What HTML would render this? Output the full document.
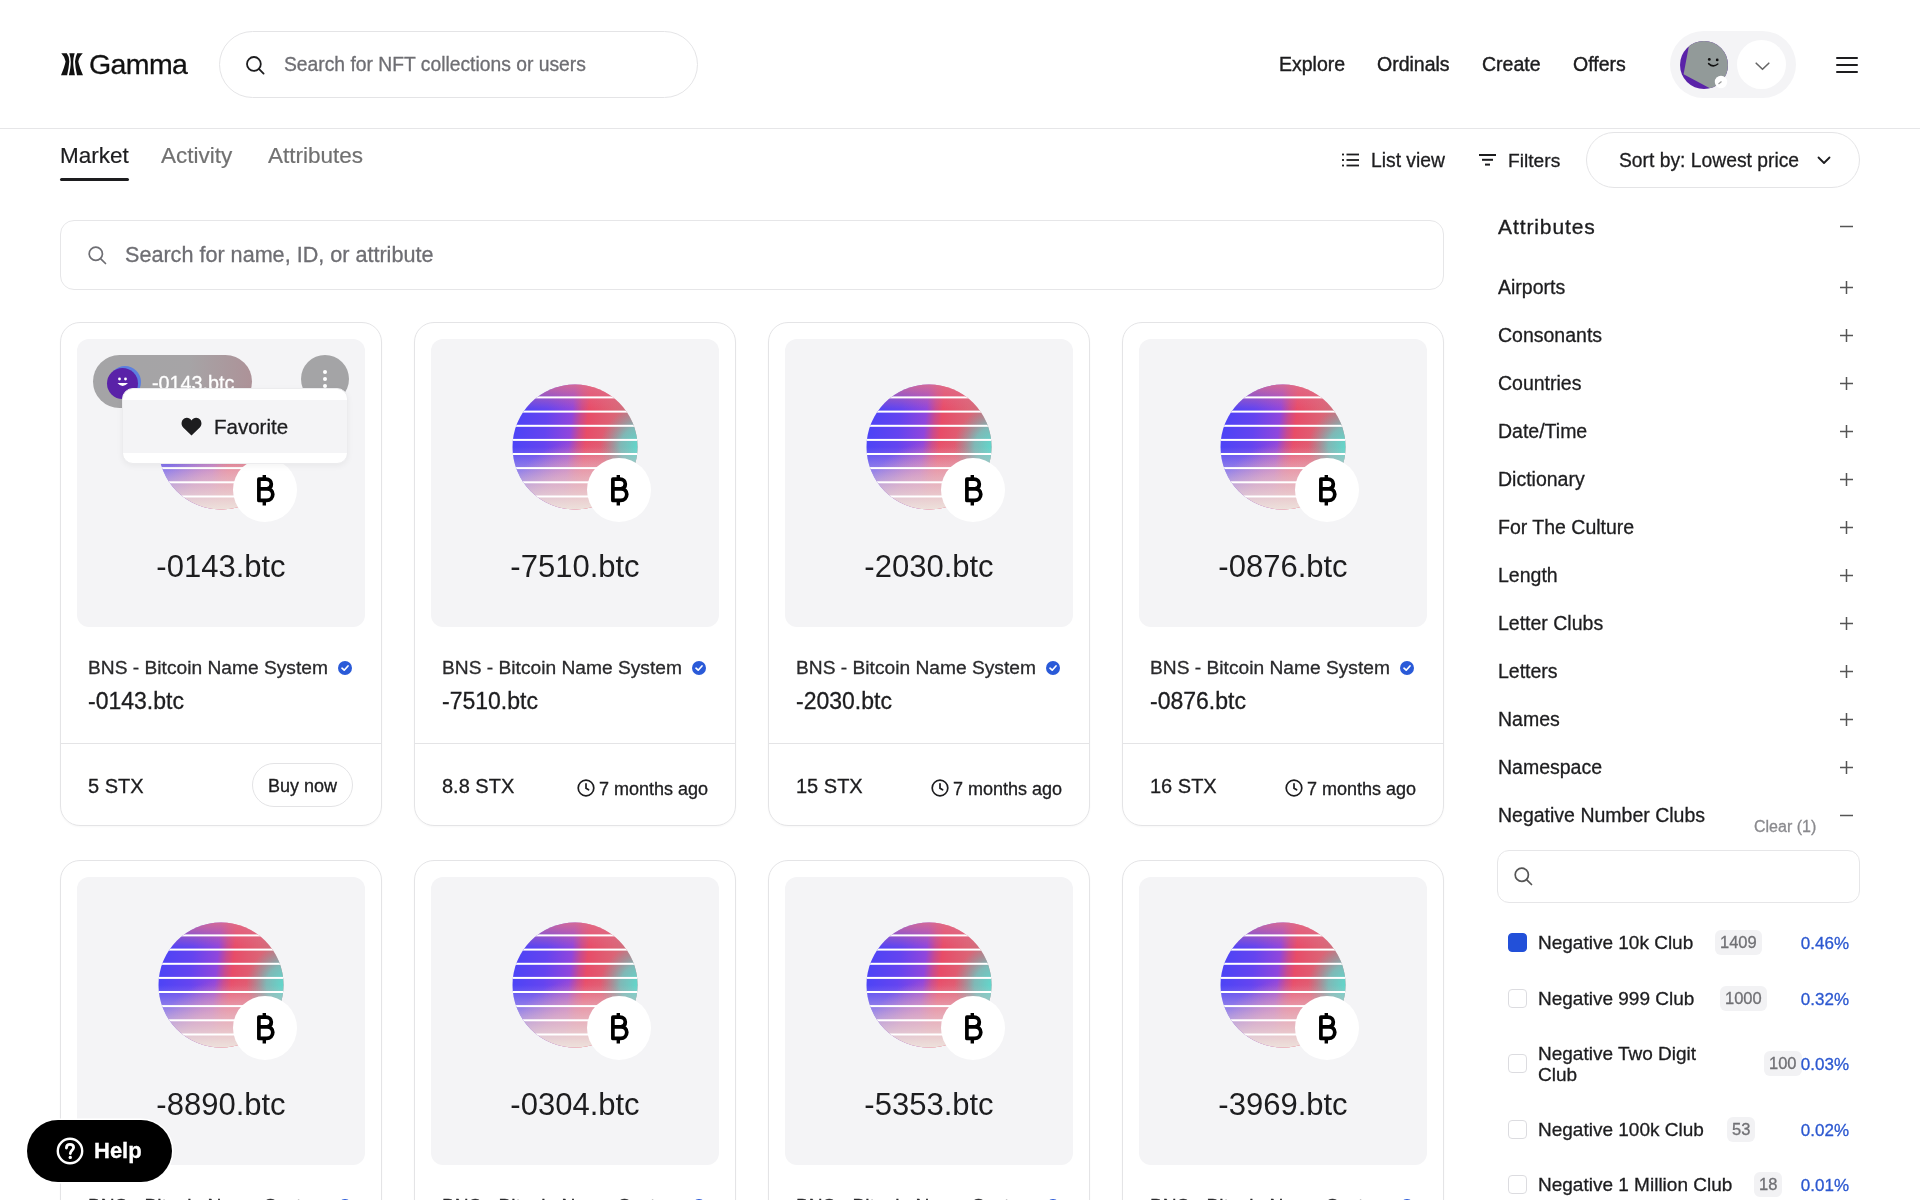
<!DOCTYPE html>
<html><head><meta charset="utf-8"><title>Gamma</title><style>
*{box-sizing:border-box;margin:0;padding:0}
html,body{width:1920px;height:1200px;overflow:hidden;background:#fff}
body{font-family:"Liberation Sans",sans-serif;color:#1d1d1f;position:relative;-webkit-text-stroke-width:0.3px}
.a{position:absolute;white-space:nowrap}
.hdr-line{position:absolute;left:0;top:128px;width:1920px;height:1px;background:#e6e6e8}
.pill{position:absolute;border:1.5px solid #e4e4e6;border-radius:40px;background:#fff}
.nav{position:absolute;top:52px;font-size:19.5px;color:#1d1d1f;-webkit-text-stroke:0.4px #1d1d1f;line-height:24px}
.tab{position:absolute;top:142px;font-size:22.5px;line-height:28px;color:#717171;-webkit-text-stroke:0.2px #717171}
.card{position:absolute;width:322px;height:504px;border:1px solid #e4e4e6;border-radius:20px;background:#fff;overflow:hidden;box-shadow:0 1px 2px rgba(0,0,0,0.03)}
.img{position:absolute;left:16px;top:16px;width:288px;height:288px;background:#f4f4f6;border-radius:12px;overflow:hidden}
.circ{position:absolute;left:81px;top:45px;width:126px;height:126px}
.badge{position:absolute;left:156px;top:119px;width:64px;height:64px;border-radius:50%;background:#fff}
.bname{position:absolute;left:0;width:288px;top:208px;text-align:center;font-size:31px;line-height:40px;color:#1d1d1f;-webkit-text-stroke-width:0}
.coll{position:absolute;left:27px;top:333px;font-size:19.2px;line-height:24px;color:#2a2a2c}
.tid{position:absolute;left:27px;top:363.5px;font-size:23px;line-height:28px;color:#1d1d1f}
.div{position:absolute;left:0;top:420px;width:100%;height:1px;background:#e4e4e6}
.price{position:absolute;left:27px;top:449px;font-size:20px;line-height:28px;color:#1d1d1f}
.ago{position:absolute;right:27px;top:454px;font-size:18px;line-height:24px;color:#1d1d1f}
.side{position:absolute;left:1498px;font-size:19.5px;line-height:24px;color:#1d1d1f}
.plus{position:absolute;left:1840px;width:13px;height:13px}
.chk{position:absolute;left:1508px;width:19px;height:19px;border:1.5px solid #dcdce0;border-radius:4px;background:#fff}
.cnt{position:absolute;height:25px;border-radius:6px;background:#f2f2f4;color:#707074;font-size:16.5px;line-height:25px;padding:0 5px}
.pct{position:absolute;right:71px;font-size:17px;line-height:22px;color:#2c58d0}
</style></head>
<body><div id="root" style="position:absolute;left:0;top:0;width:1920px;height:1200px;will-change:transform"><svg width="0" height="0" style="position:absolute">
<defs>
<clipPath id="cc"><circle cx="63" cy="63" r="62.5"/></clipPath>
<linearGradient id="g1" x1="0" y1="0.45" x2="1" y2="0.55">
<stop offset="0" stop-color="#4c44f6"/><stop offset="0.25" stop-color="#6444f0"/><stop offset="0.45" stop-color="#9046dc"/><stop offset="0.52" stop-color="#c84a90"/><stop offset="0.58" stop-color="#e84c68"/><stop offset="0.78" stop-color="#dc6476"/><stop offset="1" stop-color="#b88088"/>
</linearGradient>
<radialGradient id="g4" cx="0.55" cy="1.05" r="0.6">
<stop offset="0" stop-color="#e88a9c" stop-opacity="1"/><stop offset="0.6" stop-color="#e48aa0" stop-opacity="0.6"/><stop offset="1" stop-color="#e48aa0" stop-opacity="0"/>
</radialGradient>
<radialGradient id="g3" cx="1.02" cy="0.5" r="0.32">
<stop offset="0" stop-color="#5cdccf" stop-opacity="1"/><stop offset="0.5" stop-color="#6ccac4" stop-opacity="0.8"/><stop offset="1" stop-color="#80a0a8" stop-opacity="0"/>
</radialGradient>
<linearGradient id="g2" x1="0" y1="0" x2="0" y2="1">
<stop offset="0" stop-color="#e0708a" stop-opacity="0.85"/><stop offset="0.2" stop-color="#e07090" stop-opacity="0"/><stop offset="0.5" stop-color="#f0dcdc" stop-opacity="0"/><stop offset="0.8" stop-color="#e8cfd4" stop-opacity="0.7"/><stop offset="1" stop-color="#ede2dc" stop-opacity="1"/>
</linearGradient>
</defs></svg>
<svg class="a" style="left:61px;top:53px" width="23" height="23" viewBox="0 0 23 23"><path d="M0.3 0.3 L5.8 0.3 Q8.6 4 8.3 8.6 Q8 14 6.1 22.2 L0 22.2 Q3.6 14 4.6 8.6 Q4.3 4.5 0.3 0.3 Z" fill="#111"/><path d="M8.3 0.3 L13.7 0.3 Q12.2 5 12.2 9 Q12.2 14 13.9 22.2 L7.9 22.2 Q9.8 14 9.8 9 Q9.8 5 8.3 0.3 Z" fill="#111"/><path d="M16.2 0.3 L21.8 0.3 Q17.6 4.5 17.3 8.6 Q18.2 14 22 22.2 L16 22.2 Q14.2 14 14 8.6 Q14.4 4 16.2 0.3 Z" fill="#111"/></svg>
<div class="a" style="left:89px;top:46px;font-size:28.5px;line-height:36px;color:#111;letter-spacing:-0.6px">Gamma</div>
<div class="pill" style="left:219px;top:31px;width:479px;height:67px;border-radius:34px"></div>
<svg class="a" style="left:246px;top:55.5px" width="19" height="19" viewBox="0 0 19 19"><circle cx="7.9" cy="7.9" r="6.9" fill="none" stroke="#1d1d1f" stroke-width="1.8"/><path d="M12.9 12.9 L17.6 17.6" stroke="#1d1d1f" stroke-width="1.8" stroke-linecap="round"/></svg>
<div class="a" style="left:284px;top:53px;font-size:19.3px;line-height:24px;color:#6e6e73">Search for NFT collections or users</div>
<div class="nav" style="left:1279px">Explore</div>
<div class="nav" style="left:1377px">Ordinals</div>
<div class="nav" style="left:1482px">Create</div>
<div class="nav" style="left:1573px">Offers</div>
<div class="a" style="left:1670px;top:31px;width:126px;height:67px;border-radius:34px;background:#f4f4f6"></div>
<svg class="a" style="left:1680px;top:40.5px" width="48" height="48" viewBox="0 0 48 48"><defs><clipPath id="av"><circle cx="24" cy="24" r="24"/></clipPath></defs><g clip-path="url(#av)"><rect width="48" height="48" fill="#5a22a8"/><path d="M10.6 -4 L3.6 33.2 L50 58 L60 -4 Z" fill="#929a99"/><circle cx="29.3" cy="18.4" r="1.4" fill="#111"/><circle cx="37.2" cy="18.9" r="1.4" fill="#111"/><path d="M28.6 22.6 Q33 27 37.8 23" fill="none" stroke="#111" stroke-width="1.5" stroke-linecap="round"/></g><circle cx="41" cy="41" r="6.2" fill="#fff"/><path d="M38.5 43 L41.5 40.5" stroke="#9a9a9a" stroke-width="1.1"/></svg>
<div class="a" style="left:1737px;top:40px;width:49px;height:49px;border-radius:50%;background:#fff"></div>
<svg class="a" style="left:1755px;top:62px" width="15" height="9" viewBox="0 0 15 9"><path d="M1.2 1.2 L7.5 7.3 L13.8 1.2" fill="none" stroke="#666" stroke-width="1.6" stroke-linecap="round" stroke-linejoin="round"/></svg>
<div class="a" style="left:1836px;top:56.8px;width:22px;height:2.4px;border-radius:2px;background:#1d1d1f"></div>
<div class="a" style="left:1836px;top:63.8px;width:22px;height:2.4px;border-radius:2px;background:#1d1d1f"></div>
<div class="a" style="left:1836px;top:70.8px;width:22px;height:2.4px;border-radius:2px;background:#1d1d1f"></div>
<div class="hdr-line"></div>

<div class="tab" style="left:60px;color:#1d1d1f;-webkit-text-stroke:0.2px #1d1d1f">Market</div>
<div class="a" style="left:60px;top:178px;width:69px;height:2.8px;border-radius:2px;background:#1d1d1f"></div>
<div class="tab" style="left:161px">Activity</div>
<div class="tab" style="left:268px">Attributes</div>

<svg class="a" style="left:1342px;top:153px" width="17" height="14" viewBox="0 0 17 14"><rect x="0" y="0.6" width="2" height="1.8" fill="#1d1d1f"/><rect x="0" y="6.1" width="2" height="1.8" fill="#1d1d1f"/><rect x="0" y="11.6" width="2" height="1.8" fill="#1d1d1f"/><rect x="4.5" y="0.6" width="12.5" height="1.8" fill="#1d1d1f"/><rect x="4.5" y="6.1" width="12.5" height="1.8" fill="#1d1d1f"/><rect x="4.5" y="11.6" width="12.5" height="1.8" fill="#1d1d1f"/></svg>
<div class="a" style="left:1371px;top:149px;font-size:19.3px;line-height:24px;color:#1d1d1f">List view</div>
<svg class="a" style="left:1479px;top:154px" width="17" height="12" viewBox="0 0 17 12"><rect x="0" y="0" width="17" height="2" fill="#1d1d1f"/><rect x="3" y="4.8" width="11" height="2" fill="#1d1d1f"/><rect x="6" y="9.6" width="5" height="2" fill="#1d1d1f"/></svg>
<div class="a" style="left:1508px;top:149px;font-size:19.2px;line-height:24px;color:#1d1d1f">Filters</div>
<div class="pill" style="left:1586px;top:132px;width:274px;height:56px;border-radius:28px"></div>
<div class="a" style="left:1619px;top:149px;font-size:19.3px;line-height:24px;color:#1d1d1f">Sort by: Lowest price</div>
<svg class="a" style="left:1817px;top:156px" width="14" height="9" viewBox="0 0 14 9"><path d="M1.5 1.5 L7 7 L12.5 1.5" fill="none" stroke="#1d1d1f" stroke-width="1.8" stroke-linecap="round" stroke-linejoin="round"/></svg>

<div class="a" style="left:60px;top:220px;width:1384px;height:70px;border:1.5px solid #e6e6e8;border-radius:14px;background:#fff"></div>
<svg class="a" style="left:88px;top:246px" width="19" height="19" viewBox="0 0 19 19"><circle cx="7.8" cy="7.8" r="6.6" fill="none" stroke="#6e6e73" stroke-width="1.7"/><path d="M12.8 12.8 L17.5 17.5" stroke="#6e6e73" stroke-width="1.7" stroke-linecap="round"/></svg>
<div class="a" style="left:125px;top:241px;font-size:21.6px;line-height:28px;color:#6e6e73">Search for name, ID, or attribute</div>
<div class="card" style="left:60px;top:322px"><div class="img"><svg class="circ" viewBox="0 0 126 126"><g clip-path="url(#cc)"><rect width="126" height="126" fill="url(#g1)"/><rect width="126" height="126" fill="url(#g4)"/><rect width="126" height="126" fill="url(#g3)"/><rect width="126" height="126" fill="url(#g2)"/><rect x="0" y="12.40" width="126" height="2" fill="#fff"/><rect x="0" y="26.60" width="126" height="2" fill="#fff"/><rect x="0" y="40.80" width="126" height="2" fill="#fff"/><rect x="0" y="54.90" width="126" height="2" fill="#fff"/><rect x="0" y="69.00" width="126" height="2" fill="#fff"/><rect x="0" y="83.10" width="126" height="2" fill="#fff"/><rect x="0" y="97.30" width="126" height="2" fill="#fff"/><rect x="0" y="111.50" width="126" height="2" fill="#fff"/></g></svg><div class="badge"><svg style="position:absolute;left:22px;top:15px" width="20" height="33" viewBox="0 0 20 33"><path d="M3.9 6.2 H11 C14.4 6.2 16.3 8.2 16.3 11 C16.3 13.6 14.6 15.4 12.2 15.8 C15.4 16 17.8 18 17.8 21.3 C17.8 24.8 15.3 27.4 11.6 27.4 H3.9 Z M3.9 15.9 H12.2" fill="none" stroke="#000" stroke-width="3.7" stroke-linejoin="round"/><path d="M9.3 2 V6.2 M9.3 27.4 V32.5" stroke="#000" stroke-width="3.4"/></svg></div><div class="bname">-0143.btc</div>
<div class="a" style="left:16px;top:16px;width:159px;height:53px;border-radius:27px;background:linear-gradient(90deg,#a4a4a6 0%,#a6a4a6 60%,#ad9298 100%)"></div>
<div class="a" style="left:32px;top:27px;width:32px;height:32px;border-radius:50%;background:#5c7fe0"></div>
<div class="a" style="left:30px;top:29px;width:31px;height:31px;border-radius:50%;background:#5a22a8"></div>
<svg class="a" style="left:36px;top:35px" width="20" height="18" viewBox="0 0 20 18"><circle cx="6.5" cy="5" r="1.4" fill="#fff"/><circle cx="12.5" cy="5" r="1.4" fill="#fff"/><path d="M4.5 9 Q9.5 15 15 9 Z" fill="#fff"/></svg>
<div class="a" style="left:75px;top:32px;font-size:19.8px;line-height:24px;color:#fff">-0143.btc</div>
<div class="a" style="left:224px;top:16px;width:48px;height:48px;border-radius:50%;background:#a4a4a6"></div>
<div class="a" style="left:246px;top:31px;width:4px;height:4px;border-radius:50%;background:#fff"></div>
<div class="a" style="left:246px;top:38px;width:4px;height:4px;border-radius:50%;background:#fff"></div>
<div class="a" style="left:246px;top:45px;width:4px;height:4px;border-radius:50%;background:#fff"></div>
<div class="a" style="left:45px;top:49px;width:226px;height:76px;border-radius:11px;background:#fff;border:1px solid #ececee;box-shadow:0 2px 6px rgba(0,0,0,0.05)"></div>
<div class="a" style="left:46px;top:61px;width:224px;height:53px;background:#f4f4f6"></div>
<svg class="a" style="left:104px;top:78px" width="21" height="19" viewBox="0 0 21 19"><path d="M10.5 18.5 L2.2 10.4 C-0.4 7.8 0.2 3.4 3.2 1.6 C5.8 0.1 8.8 1 10.5 3.4 C12.2 1 15.2 0.1 17.8 1.6 C20.8 3.4 21.4 7.8 18.8 10.4 Z" fill="#1d1d1f"/></svg>
<div class="a" style="left:137px;top:76px;font-size:20.5px;line-height:24px;color:#1d1d1f">Favorite</div>
</div><div class="coll">BNS - Bitcoin Name System<span style="position:absolute;left:250px;top:5px"><svg style="position:absolute" width="14" height="14" viewBox="0 0 14 14"><circle cx="7" cy="7" r="7" fill="#2a5ad8"/><path d="M4 7.2 L6.2 9.2 L10 5" fill="none" stroke="#fff" stroke-width="1.7" stroke-linecap="round" stroke-linejoin="round"/></svg></span></div><div class="tid">-0143.btc</div><div class="div"></div><div class="price">5 STX</div><div class="a" style="left:191px;top:440px;width:101px;height:44px;border:1.5px solid #e3e3e5;border-radius:22px;font-size:18px;line-height:45px;text-align:center;color:#1d1d1f">Buy now</div></div><div class="card" style="left:414px;top:322px"><div class="img"><svg class="circ" viewBox="0 0 126 126"><g clip-path="url(#cc)"><rect width="126" height="126" fill="url(#g1)"/><rect width="126" height="126" fill="url(#g4)"/><rect width="126" height="126" fill="url(#g3)"/><rect width="126" height="126" fill="url(#g2)"/><rect x="0" y="12.40" width="126" height="2" fill="#fff"/><rect x="0" y="26.60" width="126" height="2" fill="#fff"/><rect x="0" y="40.80" width="126" height="2" fill="#fff"/><rect x="0" y="54.90" width="126" height="2" fill="#fff"/><rect x="0" y="69.00" width="126" height="2" fill="#fff"/><rect x="0" y="83.10" width="126" height="2" fill="#fff"/><rect x="0" y="97.30" width="126" height="2" fill="#fff"/><rect x="0" y="111.50" width="126" height="2" fill="#fff"/></g></svg><div class="badge"><svg style="position:absolute;left:22px;top:15px" width="20" height="33" viewBox="0 0 20 33"><path d="M3.9 6.2 H11 C14.4 6.2 16.3 8.2 16.3 11 C16.3 13.6 14.6 15.4 12.2 15.8 C15.4 16 17.8 18 17.8 21.3 C17.8 24.8 15.3 27.4 11.6 27.4 H3.9 Z M3.9 15.9 H12.2" fill="none" stroke="#000" stroke-width="3.7" stroke-linejoin="round"/><path d="M9.3 2 V6.2 M9.3 27.4 V32.5" stroke="#000" stroke-width="3.4"/></svg></div><div class="bname">-7510.btc</div></div><div class="coll">BNS - Bitcoin Name System<span style="position:absolute;left:250px;top:5px"><svg style="position:absolute" width="14" height="14" viewBox="0 0 14 14"><circle cx="7" cy="7" r="7" fill="#2a5ad8"/><path d="M4 7.2 L6.2 9.2 L10 5" fill="none" stroke="#fff" stroke-width="1.7" stroke-linecap="round" stroke-linejoin="round"/></svg></span></div><div class="tid">-7510.btc</div><div class="div"></div><div class="price">8.8 STX</div><div class="ago"><svg style="position:absolute;left:-22px;top:2px" width="18" height="18" viewBox="0 0 18 18"><circle cx="9" cy="9" r="7.8" fill="none" stroke="#1d1d1f" stroke-width="1.7"/><path d="M9 4.8 V9.2 L11.6 10.8" fill="none" stroke="#1d1d1f" stroke-width="1.7" stroke-linecap="round"/></svg>7 months ago</div></div><div class="card" style="left:768px;top:322px"><div class="img"><svg class="circ" viewBox="0 0 126 126"><g clip-path="url(#cc)"><rect width="126" height="126" fill="url(#g1)"/><rect width="126" height="126" fill="url(#g4)"/><rect width="126" height="126" fill="url(#g3)"/><rect width="126" height="126" fill="url(#g2)"/><rect x="0" y="12.40" width="126" height="2" fill="#fff"/><rect x="0" y="26.60" width="126" height="2" fill="#fff"/><rect x="0" y="40.80" width="126" height="2" fill="#fff"/><rect x="0" y="54.90" width="126" height="2" fill="#fff"/><rect x="0" y="69.00" width="126" height="2" fill="#fff"/><rect x="0" y="83.10" width="126" height="2" fill="#fff"/><rect x="0" y="97.30" width="126" height="2" fill="#fff"/><rect x="0" y="111.50" width="126" height="2" fill="#fff"/></g></svg><div class="badge"><svg style="position:absolute;left:22px;top:15px" width="20" height="33" viewBox="0 0 20 33"><path d="M3.9 6.2 H11 C14.4 6.2 16.3 8.2 16.3 11 C16.3 13.6 14.6 15.4 12.2 15.8 C15.4 16 17.8 18 17.8 21.3 C17.8 24.8 15.3 27.4 11.6 27.4 H3.9 Z M3.9 15.9 H12.2" fill="none" stroke="#000" stroke-width="3.7" stroke-linejoin="round"/><path d="M9.3 2 V6.2 M9.3 27.4 V32.5" stroke="#000" stroke-width="3.4"/></svg></div><div class="bname">-2030.btc</div></div><div class="coll">BNS - Bitcoin Name System<span style="position:absolute;left:250px;top:5px"><svg style="position:absolute" width="14" height="14" viewBox="0 0 14 14"><circle cx="7" cy="7" r="7" fill="#2a5ad8"/><path d="M4 7.2 L6.2 9.2 L10 5" fill="none" stroke="#fff" stroke-width="1.7" stroke-linecap="round" stroke-linejoin="round"/></svg></span></div><div class="tid">-2030.btc</div><div class="div"></div><div class="price">15 STX</div><div class="ago"><svg style="position:absolute;left:-22px;top:2px" width="18" height="18" viewBox="0 0 18 18"><circle cx="9" cy="9" r="7.8" fill="none" stroke="#1d1d1f" stroke-width="1.7"/><path d="M9 4.8 V9.2 L11.6 10.8" fill="none" stroke="#1d1d1f" stroke-width="1.7" stroke-linecap="round"/></svg>7 months ago</div></div><div class="card" style="left:1122px;top:322px"><div class="img"><svg class="circ" viewBox="0 0 126 126"><g clip-path="url(#cc)"><rect width="126" height="126" fill="url(#g1)"/><rect width="126" height="126" fill="url(#g4)"/><rect width="126" height="126" fill="url(#g3)"/><rect width="126" height="126" fill="url(#g2)"/><rect x="0" y="12.40" width="126" height="2" fill="#fff"/><rect x="0" y="26.60" width="126" height="2" fill="#fff"/><rect x="0" y="40.80" width="126" height="2" fill="#fff"/><rect x="0" y="54.90" width="126" height="2" fill="#fff"/><rect x="0" y="69.00" width="126" height="2" fill="#fff"/><rect x="0" y="83.10" width="126" height="2" fill="#fff"/><rect x="0" y="97.30" width="126" height="2" fill="#fff"/><rect x="0" y="111.50" width="126" height="2" fill="#fff"/></g></svg><div class="badge"><svg style="position:absolute;left:22px;top:15px" width="20" height="33" viewBox="0 0 20 33"><path d="M3.9 6.2 H11 C14.4 6.2 16.3 8.2 16.3 11 C16.3 13.6 14.6 15.4 12.2 15.8 C15.4 16 17.8 18 17.8 21.3 C17.8 24.8 15.3 27.4 11.6 27.4 H3.9 Z M3.9 15.9 H12.2" fill="none" stroke="#000" stroke-width="3.7" stroke-linejoin="round"/><path d="M9.3 2 V6.2 M9.3 27.4 V32.5" stroke="#000" stroke-width="3.4"/></svg></div><div class="bname">-0876.btc</div></div><div class="coll">BNS - Bitcoin Name System<span style="position:absolute;left:250px;top:5px"><svg style="position:absolute" width="14" height="14" viewBox="0 0 14 14"><circle cx="7" cy="7" r="7" fill="#2a5ad8"/><path d="M4 7.2 L6.2 9.2 L10 5" fill="none" stroke="#fff" stroke-width="1.7" stroke-linecap="round" stroke-linejoin="round"/></svg></span></div><div class="tid">-0876.btc</div><div class="div"></div><div class="price">16 STX</div><div class="ago"><svg style="position:absolute;left:-22px;top:2px" width="18" height="18" viewBox="0 0 18 18"><circle cx="9" cy="9" r="7.8" fill="none" stroke="#1d1d1f" stroke-width="1.7"/><path d="M9 4.8 V9.2 L11.6 10.8" fill="none" stroke="#1d1d1f" stroke-width="1.7" stroke-linecap="round"/></svg>7 months ago</div></div><div class="card" style="left:60px;top:860px"><div class="img"><svg class="circ" viewBox="0 0 126 126"><g clip-path="url(#cc)"><rect width="126" height="126" fill="url(#g1)"/><rect width="126" height="126" fill="url(#g4)"/><rect width="126" height="126" fill="url(#g3)"/><rect width="126" height="126" fill="url(#g2)"/><rect x="0" y="12.40" width="126" height="2" fill="#fff"/><rect x="0" y="26.60" width="126" height="2" fill="#fff"/><rect x="0" y="40.80" width="126" height="2" fill="#fff"/><rect x="0" y="54.90" width="126" height="2" fill="#fff"/><rect x="0" y="69.00" width="126" height="2" fill="#fff"/><rect x="0" y="83.10" width="126" height="2" fill="#fff"/><rect x="0" y="97.30" width="126" height="2" fill="#fff"/><rect x="0" y="111.50" width="126" height="2" fill="#fff"/></g></svg><div class="badge"><svg style="position:absolute;left:22px;top:15px" width="20" height="33" viewBox="0 0 20 33"><path d="M3.9 6.2 H11 C14.4 6.2 16.3 8.2 16.3 11 C16.3 13.6 14.6 15.4 12.2 15.8 C15.4 16 17.8 18 17.8 21.3 C17.8 24.8 15.3 27.4 11.6 27.4 H3.9 Z M3.9 15.9 H12.2" fill="none" stroke="#000" stroke-width="3.7" stroke-linejoin="round"/><path d="M9.3 2 V6.2 M9.3 27.4 V32.5" stroke="#000" stroke-width="3.4"/></svg></div><div class="bname">-8890.btc</div></div><div class="coll">BNS - Bitcoin Name System<span style="position:absolute;left:250px;top:5px"><svg style="position:absolute" width="14" height="14" viewBox="0 0 14 14"><circle cx="7" cy="7" r="7" fill="#2a5ad8"/><path d="M4 7.2 L6.2 9.2 L10 5" fill="none" stroke="#fff" stroke-width="1.7" stroke-linecap="round" stroke-linejoin="round"/></svg></span></div><div class="tid">-8890.btc</div><div class="div"></div></div><div class="card" style="left:414px;top:860px"><div class="img"><svg class="circ" viewBox="0 0 126 126"><g clip-path="url(#cc)"><rect width="126" height="126" fill="url(#g1)"/><rect width="126" height="126" fill="url(#g4)"/><rect width="126" height="126" fill="url(#g3)"/><rect width="126" height="126" fill="url(#g2)"/><rect x="0" y="12.40" width="126" height="2" fill="#fff"/><rect x="0" y="26.60" width="126" height="2" fill="#fff"/><rect x="0" y="40.80" width="126" height="2" fill="#fff"/><rect x="0" y="54.90" width="126" height="2" fill="#fff"/><rect x="0" y="69.00" width="126" height="2" fill="#fff"/><rect x="0" y="83.10" width="126" height="2" fill="#fff"/><rect x="0" y="97.30" width="126" height="2" fill="#fff"/><rect x="0" y="111.50" width="126" height="2" fill="#fff"/></g></svg><div class="badge"><svg style="position:absolute;left:22px;top:15px" width="20" height="33" viewBox="0 0 20 33"><path d="M3.9 6.2 H11 C14.4 6.2 16.3 8.2 16.3 11 C16.3 13.6 14.6 15.4 12.2 15.8 C15.4 16 17.8 18 17.8 21.3 C17.8 24.8 15.3 27.4 11.6 27.4 H3.9 Z M3.9 15.9 H12.2" fill="none" stroke="#000" stroke-width="3.7" stroke-linejoin="round"/><path d="M9.3 2 V6.2 M9.3 27.4 V32.5" stroke="#000" stroke-width="3.4"/></svg></div><div class="bname">-0304.btc</div></div><div class="coll">BNS - Bitcoin Name System<span style="position:absolute;left:250px;top:5px"><svg style="position:absolute" width="14" height="14" viewBox="0 0 14 14"><circle cx="7" cy="7" r="7" fill="#2a5ad8"/><path d="M4 7.2 L6.2 9.2 L10 5" fill="none" stroke="#fff" stroke-width="1.7" stroke-linecap="round" stroke-linejoin="round"/></svg></span></div><div class="tid">-0304.btc</div><div class="div"></div></div><div class="card" style="left:768px;top:860px"><div class="img"><svg class="circ" viewBox="0 0 126 126"><g clip-path="url(#cc)"><rect width="126" height="126" fill="url(#g1)"/><rect width="126" height="126" fill="url(#g4)"/><rect width="126" height="126" fill="url(#g3)"/><rect width="126" height="126" fill="url(#g2)"/><rect x="0" y="12.40" width="126" height="2" fill="#fff"/><rect x="0" y="26.60" width="126" height="2" fill="#fff"/><rect x="0" y="40.80" width="126" height="2" fill="#fff"/><rect x="0" y="54.90" width="126" height="2" fill="#fff"/><rect x="0" y="69.00" width="126" height="2" fill="#fff"/><rect x="0" y="83.10" width="126" height="2" fill="#fff"/><rect x="0" y="97.30" width="126" height="2" fill="#fff"/><rect x="0" y="111.50" width="126" height="2" fill="#fff"/></g></svg><div class="badge"><svg style="position:absolute;left:22px;top:15px" width="20" height="33" viewBox="0 0 20 33"><path d="M3.9 6.2 H11 C14.4 6.2 16.3 8.2 16.3 11 C16.3 13.6 14.6 15.4 12.2 15.8 C15.4 16 17.8 18 17.8 21.3 C17.8 24.8 15.3 27.4 11.6 27.4 H3.9 Z M3.9 15.9 H12.2" fill="none" stroke="#000" stroke-width="3.7" stroke-linejoin="round"/><path d="M9.3 2 V6.2 M9.3 27.4 V32.5" stroke="#000" stroke-width="3.4"/></svg></div><div class="bname">-5353.btc</div></div><div class="coll">BNS - Bitcoin Name System<span style="position:absolute;left:250px;top:5px"><svg style="position:absolute" width="14" height="14" viewBox="0 0 14 14"><circle cx="7" cy="7" r="7" fill="#2a5ad8"/><path d="M4 7.2 L6.2 9.2 L10 5" fill="none" stroke="#fff" stroke-width="1.7" stroke-linecap="round" stroke-linejoin="round"/></svg></span></div><div class="tid">-5353.btc</div><div class="div"></div></div><div class="card" style="left:1122px;top:860px"><div class="img"><svg class="circ" viewBox="0 0 126 126"><g clip-path="url(#cc)"><rect width="126" height="126" fill="url(#g1)"/><rect width="126" height="126" fill="url(#g4)"/><rect width="126" height="126" fill="url(#g3)"/><rect width="126" height="126" fill="url(#g2)"/><rect x="0" y="12.40" width="126" height="2" fill="#fff"/><rect x="0" y="26.60" width="126" height="2" fill="#fff"/><rect x="0" y="40.80" width="126" height="2" fill="#fff"/><rect x="0" y="54.90" width="126" height="2" fill="#fff"/><rect x="0" y="69.00" width="126" height="2" fill="#fff"/><rect x="0" y="83.10" width="126" height="2" fill="#fff"/><rect x="0" y="97.30" width="126" height="2" fill="#fff"/><rect x="0" y="111.50" width="126" height="2" fill="#fff"/></g></svg><div class="badge"><svg style="position:absolute;left:22px;top:15px" width="20" height="33" viewBox="0 0 20 33"><path d="M3.9 6.2 H11 C14.4 6.2 16.3 8.2 16.3 11 C16.3 13.6 14.6 15.4 12.2 15.8 C15.4 16 17.8 18 17.8 21.3 C17.8 24.8 15.3 27.4 11.6 27.4 H3.9 Z M3.9 15.9 H12.2" fill="none" stroke="#000" stroke-width="3.7" stroke-linejoin="round"/><path d="M9.3 2 V6.2 M9.3 27.4 V32.5" stroke="#000" stroke-width="3.4"/></svg></div><div class="bname">-3969.btc</div></div><div class="coll">BNS - Bitcoin Name System<span style="position:absolute;left:250px;top:5px"><svg style="position:absolute" width="14" height="14" viewBox="0 0 14 14"><circle cx="7" cy="7" r="7" fill="#2a5ad8"/><path d="M4 7.2 L6.2 9.2 L10 5" fill="none" stroke="#fff" stroke-width="1.7" stroke-linecap="round" stroke-linejoin="round"/></svg></span></div><div class="tid">-3969.btc</div><div class="div"></div></div><div class="side" style="top:214px;font-size:21px;line-height:26px;color:#1d1d1f;-webkit-text-stroke:0.35px #1d1d1f;letter-spacing:0.9px">Attributes</div><svg class="plus" style="top:219.5px" width="13" height="13" viewBox="0 0 13 13"><path d="M0 6.5 H13" stroke="#555" stroke-width="1.5"/></svg><div class="side" style="top:275px">Airports</div><svg class="plus" style="top:281px" width="13" height="13" viewBox="0 0 13 13"><path d="M0 6.5 H13 M6.5 0 V13" stroke="#555" stroke-width="1.5"/></svg><div class="side" style="top:323px">Consonants</div><svg class="plus" style="top:329px" width="13" height="13" viewBox="0 0 13 13"><path d="M0 6.5 H13 M6.5 0 V13" stroke="#555" stroke-width="1.5"/></svg><div class="side" style="top:371px">Countries</div><svg class="plus" style="top:377px" width="13" height="13" viewBox="0 0 13 13"><path d="M0 6.5 H13 M6.5 0 V13" stroke="#555" stroke-width="1.5"/></svg><div class="side" style="top:419px">Date/Time</div><svg class="plus" style="top:425px" width="13" height="13" viewBox="0 0 13 13"><path d="M0 6.5 H13 M6.5 0 V13" stroke="#555" stroke-width="1.5"/></svg><div class="side" style="top:467px">Dictionary</div><svg class="plus" style="top:473px" width="13" height="13" viewBox="0 0 13 13"><path d="M0 6.5 H13 M6.5 0 V13" stroke="#555" stroke-width="1.5"/></svg><div class="side" style="top:515px">For The Culture</div><svg class="plus" style="top:521px" width="13" height="13" viewBox="0 0 13 13"><path d="M0 6.5 H13 M6.5 0 V13" stroke="#555" stroke-width="1.5"/></svg><div class="side" style="top:563px">Length</div><svg class="plus" style="top:569px" width="13" height="13" viewBox="0 0 13 13"><path d="M0 6.5 H13 M6.5 0 V13" stroke="#555" stroke-width="1.5"/></svg><div class="side" style="top:611px">Letter Clubs</div><svg class="plus" style="top:617px" width="13" height="13" viewBox="0 0 13 13"><path d="M0 6.5 H13 M6.5 0 V13" stroke="#555" stroke-width="1.5"/></svg><div class="side" style="top:659px">Letters</div><svg class="plus" style="top:665px" width="13" height="13" viewBox="0 0 13 13"><path d="M0 6.5 H13 M6.5 0 V13" stroke="#555" stroke-width="1.5"/></svg><div class="side" style="top:707px">Names</div><svg class="plus" style="top:713px" width="13" height="13" viewBox="0 0 13 13"><path d="M0 6.5 H13 M6.5 0 V13" stroke="#555" stroke-width="1.5"/></svg><div class="side" style="top:755px">Namespace</div><svg class="plus" style="top:761px" width="13" height="13" viewBox="0 0 13 13"><path d="M0 6.5 H13 M6.5 0 V13" stroke="#555" stroke-width="1.5"/></svg><div class="side" style="top:803px">Negative Number Clubs</div><svg class="plus" style="top:808.5px" width="13" height="13" viewBox="0 0 13 13"><path d="M0 6.5 H13" stroke="#555" stroke-width="1.5"/></svg><div class="a" style="left:1754px;top:817px;font-size:16px;line-height:20px;color:#8a8a8e">Clear (1)</div><div class="a" style="left:1497px;top:850px;width:363px;height:53px;border:1.5px solid #e6e6e8;border-radius:12px;background:#fff"></div><svg class="a" style="left:1514px;top:867px" width="19" height="19" viewBox="0 0 19 19"><circle cx="7.8" cy="7.8" r="6.6" fill="none" stroke="#555" stroke-width="1.7"/><path d="M12.8 12.8 L17.5 17.5" stroke="#555" stroke-width="1.7" stroke-linecap="round"/></svg><div class="chk" style="top:933px;background:#2250d9;border-color:#2250d9"></div><div class="side" style="left:1538px;top:932px;line-height:21px;font-size:19px">Negative 10k Club</div><div class="cnt" style="left:1715px;top:930px">1409</div><div class="pct" style="top:933px">0.46%</div><div class="chk" style="top:989px"></div><div class="side" style="left:1538px;top:988px;line-height:21px;font-size:19px">Negative 999 Club</div><div class="cnt" style="left:1720px;top:986px">1000</div><div class="pct" style="top:989px">0.32%</div><div class="chk" style="top:1054px"></div><div class="side" style="left:1538px;top:1043px;line-height:21px;font-size:19px">Negative Two Digit<br>Club</div><div class="cnt" style="left:1764px;top:1051px">100</div><div class="pct" style="top:1054px">0.03%</div><div class="chk" style="top:1120px"></div><div class="side" style="left:1538px;top:1119px;line-height:21px;font-size:19px">Negative 100k Club</div><div class="cnt" style="left:1727px;top:1117px">53</div><div class="pct" style="top:1120px">0.02%</div><div class="chk" style="top:1175px"></div><div class="side" style="left:1538px;top:1174px;line-height:21px;font-size:19px">Negative 1 Million Club</div><div class="cnt" style="left:1754px;top:1172px">18</div><div class="pct" style="top:1175px">0.01%</div>
<div class="a" style="left:27px;top:1120px;width:145px;height:62px;border-radius:31px;background:#000;box-shadow:0 0 0 1.5px #fff"></div>
<svg class="a" style="left:56px;top:1136.5px" width="28" height="28" viewBox="0 0 28 28"><circle cx="14" cy="14" r="12.2" fill="none" stroke="#fff" stroke-width="2.4"/><path d="M10.4 11 C10.4 8.6 12 7.4 14 7.4 C16.1 7.4 17.6 8.7 17.6 10.6 C17.6 13.2 14.3 13.5 14.3 16.6" fill="none" stroke="#fff" stroke-width="2.8" stroke-linecap="round"/><circle cx="14.3" cy="20.4" r="1.7" fill="#fff"/></svg>
<div class="a" style="left:94px;top:1137px;font-size:22px;line-height:28px;font-weight:bold;color:#fff">Help</div>
</div></body></html>
